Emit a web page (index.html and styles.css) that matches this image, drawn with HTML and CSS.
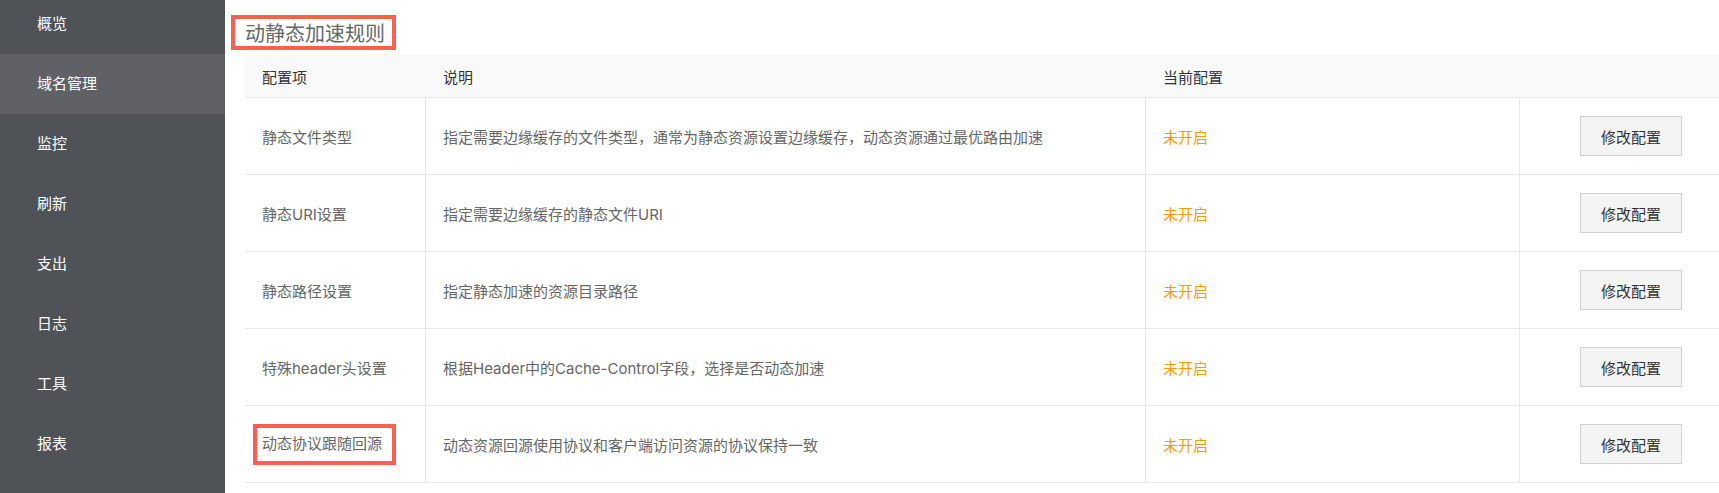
FILE: index.html
```html
<!DOCTYPE html>
<html lang="zh-CN">
<head>
<meta charset="utf-8">
<title>动静态加速规则</title>
<link rel="stylesheet" href="styles.css">
</head>
<body>
<div class="layout">
  <aside class="sidebar">
    <ul class="nav">
      <li class="nav-item">概览</li>
      <li class="nav-item active">域名管理</li>
      <li class="nav-item">监控</li>
      <li class="nav-item">刷新</li>
      <li class="nav-item">支出</li>
      <li class="nav-item">日志</li>
      <li class="nav-item">工具</li>
      <li class="nav-item">报表</li>
    </ul>
  </aside>
  <main class="main">
    <h2 class="title"><span class="title-mark">动静态加速规则</span></h2>
    <table class="rules">
      <thead>
        <tr>
          <th class="c1">配置项</th>
          <th class="c2">说明</th>
          <th class="c3">当前配置</th>
          <th class="c4"></th>
        </tr>
      </thead>
      <tbody>
        <tr>
          <td class="c1">静态文件类型</td>
          <td class="c2">指定需要边缘缓存的文件类型，通常为静态资源设置边缘缓存，动态资源通过最优路由加速</td>
          <td class="c3"><span class="status">未开启</span></td>
          <td class="c4"><button class="btn">修改配置</button></td>
        </tr>
        <tr>
          <td class="c1">静态URI设置</td>
          <td class="c2">指定需要边缘缓存的静态文件URI</td>
          <td class="c3"><span class="status">未开启</span></td>
          <td class="c4"><button class="btn">修改配置</button></td>
        </tr>
        <tr>
          <td class="c1">静态路径设置</td>
          <td class="c2">指定静态加速的资源目录路径</td>
          <td class="c3"><span class="status">未开启</span></td>
          <td class="c4"><button class="btn">修改配置</button></td>
        </tr>
        <tr>
          <td class="c1">特殊header头设置</td>
          <td class="c2">根据Header中的Cache-Control字段，选择是否动态加速</td>
          <td class="c3"><span class="status">未开启</span></td>
          <td class="c4"><button class="btn">修改配置</button></td>
        </tr>
        <tr>
          <td class="c1"><span class="mark">动态协议跟随回源</span></td>
          <td class="c2">动态资源回源使用协议和客户端访问资源的协议保持一致</td>
          <td class="c3"><span class="status">未开启</span></td>
          <td class="c4"><button class="btn">修改配置</button></td>
        </tr>
      </tbody>
    </table>
  </main>
</div>
</body>
</html>
```

FILE: styles.css
```css
* { box-sizing: border-box; }
html, body {
  margin: 0;
  padding: 0;
  background: #fff;
  font-family: "Inter", "Noto Sans CJK SC", sans-serif;
  overflow: hidden;
}
.layout {
  display: flex;
  height: 493px;
}
.sidebar {
  width: 225px;
  flex: none;
  background: #4f5257;
  overflow: hidden;
}
.nav {
  list-style: none;
  margin: -6px 0 0 0;
  padding: 0;
}
.nav-item {
  height: 60px;
  line-height: 60px;
  padding-left: 37px;
  font-size: 15px;
  color: #fff;
}
.nav-item.active {
  background: #5f6166;
}
.main {
  flex: 1;
  min-width: 0;
  padding-left: 20px;
}
.title {
  margin: 15px 0 0 -14px;
  font-weight: normal;
  font-size: 20px;
  line-height: 0;
}
.title-mark {
  display: inline-block;
  border: 4px solid #fc5f4d;
  padding: 4px 7px 1px 10px;
  line-height: 22px;
  color: #666;
}
.rules {
  margin-top: 5px;
  width: 1474px;
  table-layout: fixed;
  border-collapse: separate;
  border-spacing: 0;
  font-size: 15px;
}
.rules th {
  height: 43px;
  background: #f9f9f9;
  border-bottom: 1px solid #e8e8e8;
  color: #333;
  font-weight: normal;
  text-align: left;
  padding: 0 0 0 17px;
}
.rules td {
  height: 77px;
  border-bottom: 1px solid #e8e8e8;
  color: #666;
  padding: 0 0 0 17px;
  vertical-align: middle;
  white-space: nowrap;
}
.rules th.c1 { width: 180px; }
.rules th.c2 { width: 720px; padding-left: 18px; }
.rules th.c3 { width: 374px; padding-left: 18px; }
.rules th.c4 { width: 200px; }
.rules td.c2,
.rules td.c3,
.rules td.c4 {
  border-left: 1px solid #e8e8e8;
}
.rules td.c4 { padding-left: 60px; }
.status { color: #ff9900; }
.btn {
  width: 102px;
  height: 40px;
  background: #f4f4f4;
  border: 1px solid #d0d0d0;
  border-radius: 0;
  color: #333;
  font-family: inherit;
  font-size: 15px;
  padding: 0;
  cursor: pointer;
}
.mark {
  display: inline-block;
  border: 4px solid #fc5f4d;
  padding: 6px 10px 7px 5px;
  margin-left: -9px;
  line-height: 20px;
}
```
